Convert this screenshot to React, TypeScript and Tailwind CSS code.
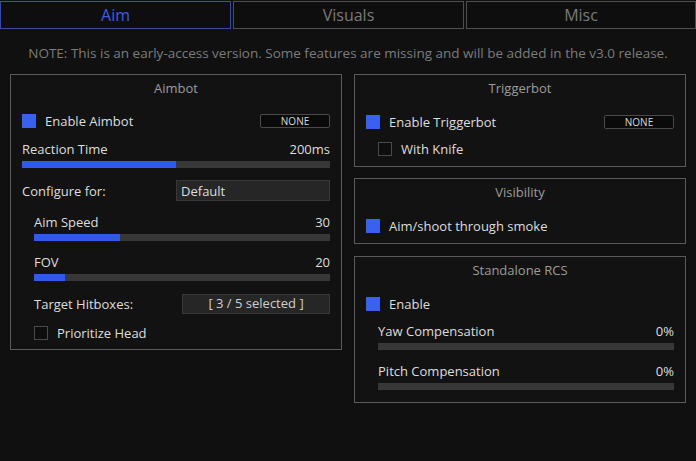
import React from "react";

const font = { fontFamily: '"Open Sans", "Noto Sans", sans-serif' };

function Check({ on }: { on: boolean }) {
  return on ? (
    <span className="block w-[14px] h-[14px] bg-[#3a60ee] shrink-0" />
  ) : (
    <span className="block w-[14px] h-[14px] border border-[#4a4a4a] bg-[#0e0e0e] shrink-0" />
  );
}

function KeyButton() {
  return (
    <div className="w-[70px] h-[14px] border border-[#4a4a4a] rounded-[2px] bg-[#0a0a0a] flex items-center justify-center text-[10px] leading-none text-[#d8d8d8]">
      NONE
    </div>
  );
}

function Slider({
  label,
  value,
  fill,
  className = "",
}: {
  label: string;
  value: string;
  fill: number;
  className?: string;
}) {
  return (
    <div className={className}>
      <div className="h-[18px] flex items-center justify-between text-[13px] text-[#dedede]">
        <span>{label}</span>
        <span>{value}</span>
      </div>
      <div className="mt-[2px] h-[7px] bg-[#383838]">
        <div className="h-full bg-[#2f5be8]" style={{ width: `${fill}px` }} />
      </div>
    </div>
  );
}

function Panel({
  title,
  className = "",
  children,
}: {
  title: string;
  className?: string;
  children: React.ReactNode;
}) {
  return (
    <div className={`border border-[#5a5a5a] bg-[#121212] px-[11px] ${className}`}>
      <div className="h-[28px] flex items-center justify-center text-[13px] text-[#9c9c9c]">
        {title}
      </div>
      {children}
    </div>
  );
}

export default function App() {
  return (
    <div className="w-[696px] h-[461px] bg-[#101010] overflow-hidden" style={font}>
      <div className="flex gap-[2px] pt-[1px]">
        <div className="w-[231px] h-[28px] border border-[#3a4a9c] border-t-[#3c4fb0] flex items-center justify-center text-[16px] text-[#3d5ce4] bg-[#0e0e10]">
          Aim
        </div>
        <div className="w-[231px] h-[28px] border border-[#4e4e4e] flex items-center justify-center text-[16px] text-[#7a7a7a] bg-[#0e0e0e]">
          Visuals
        </div>
        <div className="flex-1 h-[28px] border border-[#4e4e4e] flex items-center justify-center text-[16px] text-[#7a7a7a] bg-[#0e0e0e]">
          Misc
        </div>
      </div>

      <div className="h-[45px] pt-[3px] flex items-center justify-center text-[13.5px] text-[#7c7c7c]">
        NOTE: This is an early-access version. Some features are missing and will be added in the v3.0 release.
      </div>

      <div className="flex gap-[12px] px-[10px]">
        <Panel title="Aimbot" className="w-[333px] h-[276px]">
          <div className="mt-[11px] h-[14px] flex items-center justify-between">
            <div className="flex items-center gap-[9px] text-[13px] text-[#dedede]">
              <Check on />
              <span className="pt-[2px]">Enable Aimbot</span>
            </div>
            <KeyButton />
          </div>
          <Slider label="Reaction Time" value="200ms" fill={154} className="mt-[13px]" />
          <div className="mt-[12px] flex items-center justify-between text-[13px] text-[#dedede]">
            <span className="pt-[2px]">Configure for:</span>
            <div className="w-[154px] h-[21px] bg-[#262626] border border-[#383838] flex items-center px-[4px] pt-[1px]">
              Default
            </div>
          </div>
          <div className="pl-[12px]">
            <Slider label="Aim Speed" value="30" fill={86} className="mt-[12px]" />
            <Slider label="FOV" value="20" fill={31} className="mt-[13px]" />
            <div className="mt-[13px] flex items-center justify-between text-[13px] text-[#dedede]">
              <span className="pt-[1px]">Target Hitboxes:</span>
              <div className="w-[148px] h-[20px] bg-[#262626] border border-[#383838] flex items-center justify-center text-[#cfcfcf]">
                [ 3 / 5 selected ]
              </div>
            </div>
            <div className="mt-[12px] h-[14px] flex items-center gap-[9px] text-[13px] text-[#dedede]">
              <Check on={false} />
              <span className="pt-[1px]">Prioritize Head</span>
            </div>
          </div>
        </Panel>

        <div className="w-[333px] flex flex-col">
          <Panel title="Triggerbot" className="h-[93px]">
            <div className="mt-[12px] h-[14px] flex items-center justify-between">
              <div className="flex items-center gap-[9px] text-[13px] text-[#dedede]">
                <Check on />
                <span className="pt-[1px]">Enable Triggerbot</span>
              </div>
              <KeyButton />
            </div>
            <div className="mt-[13px] pl-[12px] h-[14px] flex items-center gap-[9px] text-[13px] text-[#dedede]">
              <Check on={false} />
              <span className="pt-[1px]">With Knife</span>
            </div>
          </Panel>

          <Panel title="Visibility" className="mt-[11px] h-[66px]">
            <div className="mt-[12px] h-[14px] flex items-center gap-[9px] text-[13px] text-[#dedede]">
              <Check on />
              <span className="pt-[1px]">Aim/shoot through smoke</span>
            </div>
          </Panel>

          <Panel title="Standalone RCS" className="mt-[12px] h-[147px]">
            <div className="mt-[12px] h-[14px] flex items-center gap-[9px] text-[13px] text-[#dedede]">
              <Check on />
              <span className="pt-[1px]">Enable</span>
            </div>
            <div className="pl-[12px]">
              <Slider label="Yaw Compensation" value="0%" fill={0} className="mt-[12px]" />
              <Slider label="Pitch Compensation" value="0%" fill={0} className="mt-[13px]" />
            </div>
          </Panel>
        </div>
      </div>
    </div>
  );
}
